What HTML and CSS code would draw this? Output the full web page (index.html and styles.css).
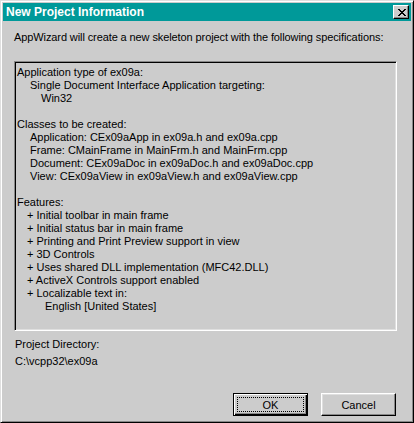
FILE: index.html
```html
<!DOCTYPE html>
<html lang="en">
<head>
  <meta charset="UTF-8" />
  <title>New Project Information</title>
  <link rel="stylesheet" href="styles.css">
</head>
<body>
  <div class="dialog">
    <div class="title-bar">
      <span class="title-text">New Project Information</span>
      <button class="close-button" type="button" aria-label="Close">
        <svg width="8" height="7" viewBox="0 0 8 7" shape-rendering="crispEdges">
          <path fill="#000" d="M0 0h2v1H0zM6 0h2v1H6zM1 1h2v1H1zM5 1h2v1H5zM2 2h4v1H2zM3 3h2v1H3zM2 4h4v1H2zM1 5h2v1H1zM5 5h2v1H5zM0 6h2v1H0zM6 6h2v1H6z"/>
        </svg>
      </button>
    </div>

    <div class="dialog-body">
      <p class="intro">AppWizard will create a new skeleton project with the following specifications:</p>

      <div class="spec-box">
        <div class="line">Application type of ex09a:</div>
        <div class="line indent">Single Document Interface Application targeting:</div>
        <div class="line indent-2">Win32</div>
        <div class="line">&nbsp;</div>
        <div class="line">Classes to be created:</div>
        <div class="line indent">Application: CEx09aApp in ex09a.h and ex09a.cpp</div>
        <div class="line indent">Frame: CMainFrame in MainFrm.h and MainFrm.cpp</div>
        <div class="line indent">Document: CEx09aDoc in ex09aDoc.h and ex09aDoc.cpp</div>
        <div class="line indent">View: CEx09aView in ex09aView.h and ex09aView.cpp</div>
        <div class="line">&nbsp;</div>
        <div class="line">Features:</div>
        <div class="line feature">+ Initial toolbar in main frame</div>
        <div class="line feature">+ Initial status bar in main frame</div>
        <div class="line feature">+ Printing and Print Preview support in view</div>
        <div class="line feature">+ 3D Controls</div>
        <div class="line feature">+ Uses shared DLL implementation (MFC42.DLL)</div>
        <div class="line feature">+ ActiveX Controls support enabled</div>
        <div class="line feature">+ Localizable text in:</div>
        <div class="line feature-sub">English [United States]</div>
      </div>

      <p class="dir-label">Project Directory:</p>
      <p class="dir-path">C:\vcpp32\ex09a</p>

      <div class="button-row">
        <button class="push-button default" type="button"><span class="focus-rect">OK</span></button>
        <button class="push-button" type="button"><span class="focus-rect">Cancel</span></button>
      </div>
    </div>
  </div>
</body>
</html>
```

FILE: styles.css
```css
body {
  margin: 0;
  background: #cccccc;
  font-family: 'Liberation Sans', Arial, sans-serif;
  font-size: 11px;
  color: #000;
}
.dialog {
  box-sizing: border-box;
  width: 414px;
  height: 423px;
  display: flex;
  flex-direction: column;
  padding: 2px;
  background: #cccccc;
  border: 1px solid;
  border-color: #dfdfdf #000 #000 #dfdfdf;
  box-shadow: inset 1px 1px #fff, inset -1px -1px #888;
}
.title-bar {
  height: 18px;
  display: flex;
  align-items: center;
  justify-content: space-between;
  padding: 0 2px 0 3px;
  background: #009999;
}
.title-text {
  color: #fff;
  font-weight: bold;
  font-size: 12px;
}
.close-button {
  box-sizing: border-box;
  width: 16px;
  height: 14px;
  padding: 0 0 0 1px;
  display: flex;
  align-items: center;
  justify-content: center;
  background: #cccccc;
  border: 1px solid;
  border-color: #fff #000 #000 #fff;
  box-shadow: inset -1px -1px #888;
}
.close-button svg {
  display: block;
}
.dialog-body {
  flex: 1;
  display: flex;
  flex-direction: column;
  padding: 0 14px 4px 11px;
}
.intro {
  margin: 10px 0 0;
  line-height: 13px;
  letter-spacing: -0.1px;
}
.spec-box {
  margin-top: 17px;
  height: 270px;
  box-sizing: border-box;
  padding: 4px 2px 0 1px;
  border: 1px solid;
  border-color: #888 #fff #fff #888;
  box-shadow: inset 1px 1px #000, inset -1px -1px #dfdfdf;
  overflow: hidden;
}
.line {
  height: 13px;
  line-height: 13px;
  padding-left: 1px;
  white-space: nowrap;
}
.indent {
  padding-left: 14px;
}
.indent-2 {
  padding-left: 25px;
}
.feature {
  padding-left: 11px;
}
.feature-sub {
  padding-left: 29px;
}
.dir-label {
  margin: 7px 0 0 1px;
  line-height: 13px;
}
.dir-path {
  margin: 4px 0 0 1px;
  line-height: 13px;
}
.button-row {
  margin-top: auto;
  display: flex;
  justify-content: flex-end;
  gap: 13px;
  padding-right: 1px;
}
.push-button {
  box-sizing: border-box;
  width: 75px;
  height: 23px;
  padding: 3px;
  display: flex;
  background: #cccccc;
  font-family: inherit;
  font-size: 11px;
  color: #000;
  border: 1px solid;
  border-color: #fff #000 #000 #fff;
  box-shadow: inset -1px -1px #888, inset 1px 1px #dfdfdf;
}
.push-button .focus-rect {
  flex: 1;
  display: flex;
  align-items: center;
  justify-content: center;
  border: 1px dotted transparent;
}
.push-button.default {
  border-color: #000;
  box-shadow: inset 1px 1px #fff, inset -1px -1px #000, inset -2px -2px #888;
}
.push-button.default .focus-rect {
  border-color: #000;
}
```
